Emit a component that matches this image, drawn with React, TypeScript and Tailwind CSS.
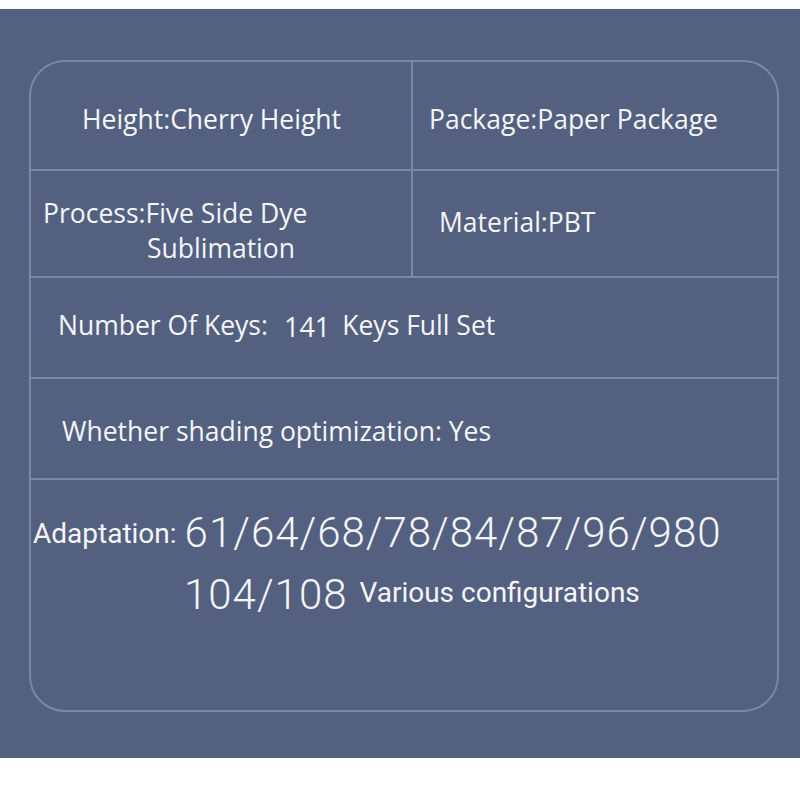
import React from "react";

const sans = "font-['Open_Sans','Noto_Sans',sans-serif]";
const narrow = "font-['Roboto','Liberation_Sans',sans-serif]";
const line = "border-[#7b87a6]";

export default function App() {
  return (
    <div className="w-[800px] h-[800px] bg-white pt-[9px]">
      <div className="h-[749px] bg-[#53607f] pt-[51px] pl-[29px]">
        {/* SPEC CARD */}
        <div className={`w-[750px] h-[652px] border-2 ${line} rounded-[36px] text-[#f5f6fa] text-[26.5px] leading-[30px] ${sans}`}>
          <div className={`flex h-[109px] border-b-2 ${line}`}>
            <div className={`w-[382px] border-r-2 ${line} pl-[51px] pt-[42px]`}>Height:Cherry Height</div>
            <div className="flex-1 pl-[16px] pt-[42px]">Package:Paper Package</div>
          </div>

          <div className={`flex h-[107px] border-b-2 ${line}`}>
            <div className={`w-[382px] border-r-2 ${line} pl-[12px] pt-[25px] leading-[35px]`}>
              <div>Process:Five Side Dye</div>
              <div className="pl-[104px]">Sublimation</div>
            </div>
            <div className="flex-1 pl-[26px] pt-[36px]">Material:PBT</div>
          </div>

          <div className={`h-[101px] border-b-2 ${line} pl-[27px] pt-[32px] flex items-baseline`}>
            <span>Number Of Keys:</span>
            <span className="ml-[16px] text-[27px] translate-y-[2px]">141</span>
            <span className="ml-[12px]">Keys Full Set</span>
          </div>

          <div className={`h-[101px] border-b-2 ${line} pl-[31px] pt-[37px]`}>Whether shading optimization: Yes</div>

          <div className={`pt-[24px] ${narrow}`}>
            <div className="flex items-baseline pl-[2px] leading-[57px]">
              <span className="text-[28px] -translate-y-[4px]">Adaptation:</span>
              <span className="font-light text-[42px] tracking-[1px] ml-[8px]">61/64/68/78/84/87/96/980</span>
            </div>
            <div className="flex items-baseline pl-[153px] leading-[57px]">
              <span className="font-light text-[42px] tracking-[1px]">104/108</span>
              <span className="text-[28px] ml-[12px] -translate-y-[7px]">Various configurations</span>
            </div>
          </div>
        </div>
      </div>
    </div>
  );
}
